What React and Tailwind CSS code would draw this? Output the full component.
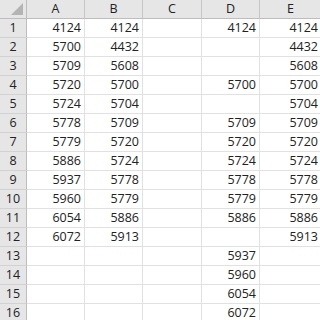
import React from 'react';

const cols = ['A', 'B', 'C', 'D', 'E'];

const rows = [
  [4124, 4124, null, 4124, 4124],
  [5700, 4432, null, null, 4432],
  [5709, 5608, null, null, 5608],
  [5720, 5700, null, 5700, 5700],
  [5724, 5704, null, null, 5704],
  [5778, 5709, null, 5709, 5709],
  [5779, 5720, null, 5720, 5720],
  [5886, 5724, null, 5724, 5724],
  [5937, 5778, null, 5778, 5778],
  [5960, 5779, null, 5779, 5779],
  [6054, 5886, null, 5886, 5886],
  [6072, 5913, null, null, 5913],
  [null, null, null, 5937, null],
  [null, null, null, 5960, null],
  [null, null, null, 6054, null],
  [null, null, null, 6072, null]
];

const App = () => {
  return (
    <div
      className="w-[320px] h-[320px] overflow-hidden bg-white text-[#222] text-[12.5px]"
      style={{ fontFamily: '"Open Sans", "Noto Sans", sans-serif' }}
    >
      <div className="grid grid-cols-[27px_58px_58px_59px_58px_62px] auto-rows-[19px]">
        {/* Corner */}
        <div className="relative bg-[#e6e6e6] border-r border-b border-[#bdbdbd]">
          <div className="absolute right-[3px] bottom-[3px] w-0 h-0 border-l-[12px] border-l-transparent border-b-[12px] border-b-[#b4b4b4]"></div>
        </div>
        {cols.map((c) => (
          <div
            key={c}
            className="bg-[#e6e6e6] border-r border-b border-[#c6c6c6] border-b-[#bdbdbd] flex items-center justify-center leading-none"
          >
            {c}
          </div>
        ))}

        {rows.map((row, i) => (
          <React.Fragment key={i}>
            <div className="bg-[#e6e6e6] border-r border-b border-[#d2d2d2] border-r-[#bdbdbd] flex items-center justify-center leading-none">
              {i + 1}
            </div>
            {row.map((v, j) => (
              <div
                key={j}
                className="border-r border-b border-[#e1e1e1] flex items-center justify-end pr-[3px] leading-none"
              >
                {v}
              </div>
            ))}
          </React.Fragment>
        ))}
      </div>
    </div>
  );
};

export default App;
